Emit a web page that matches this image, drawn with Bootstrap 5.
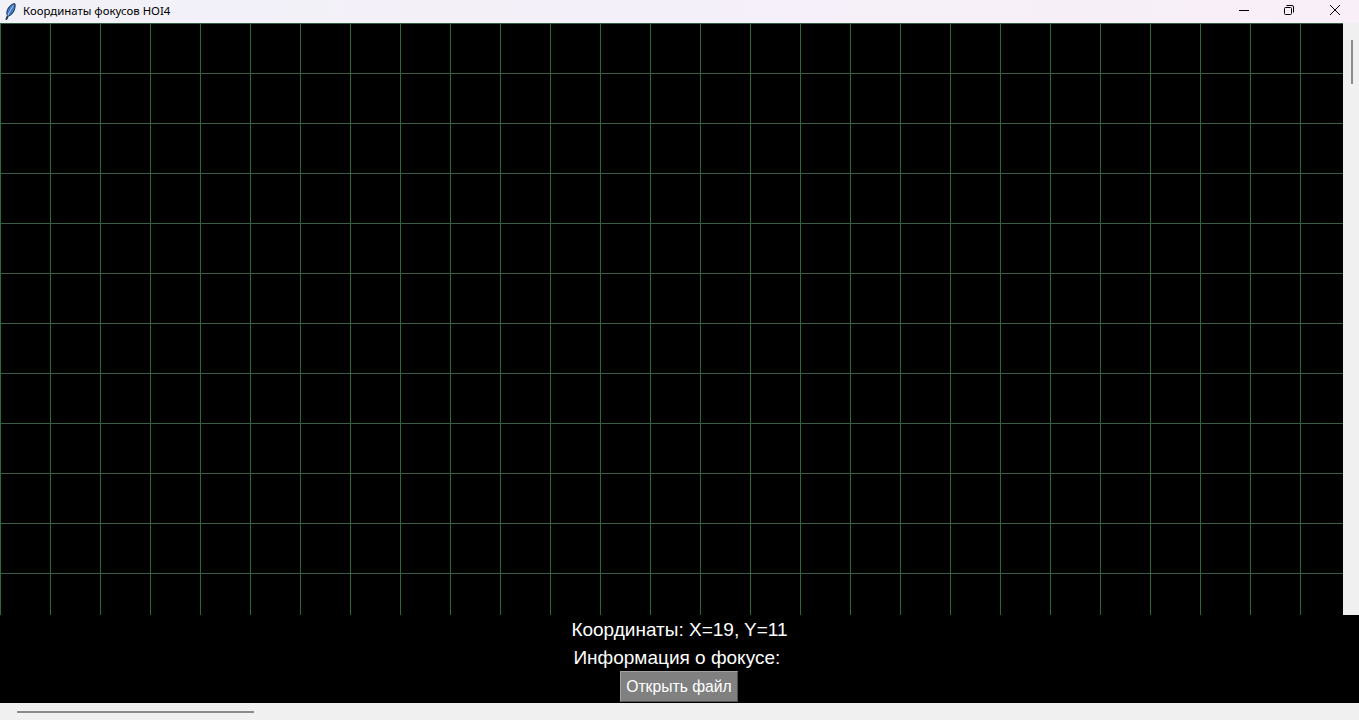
<!DOCTYPE html>
<html lang="ru">
<head>
    <meta charset="UTF-8">
    <meta name="viewport" content="width=device-width, initial-scale=1.0">
    <title>Координаты фокусов HOI4</title>
    <link href="https://cdn.jsdelivr.net/npm/bootstrap@5.3.0/dist/css/bootstrap.min.css" rel="stylesheet">
    <style>
        html, body {
            height: 100%;
            overflow: hidden;
        }
        body {
            background: #f0f0f0;
        }
        .app-window {
            height: 720px;
        }
        .title-bar {
            height: 23px;
            background: linear-gradient(90deg, #f2f1f8 0%, #f4f0f9 50%, #f9eff8 100%);
            font-family: "Noto Sans", sans-serif;
            font-size: 11.4px;
            color: #000;
        }
        .title-icon {
            width: 23px;
            padding-left: 4px;
        }
        .title-text {
            margin-bottom: 2px;
        }
        .win-btn {
            width: 46px;
            height: 20px;
        }
        .win-btns {
            margin-right: 1px;
        }
        .canvas-row {
            height: 592px;
        }
        .grid-area {
            background-color: #000;
            background-image:
                linear-gradient(90deg, #27693b 1px, transparent 1px),
                linear-gradient(180deg, #375c45 1px, transparent 1px);
            background-size: 50px 50px;
        }
        .v-scroll {
            width: 16px;
            background: #f0f0f0;
            padding: 17px 6px 0 8px;
        }
        .v-thumb {
            height: 44px;
            background: #8b8b8b;
        }
        .info-panel {
            height: 88px;
            background: #000;
            color: #fff;
            font-family: "Liberation Sans", sans-serif;
            font-size: 19px;
            padding-top: 3px;
        }
        .info-line {
            height: 24px;
            line-height: 24px;
            white-space: pre;
        }
        .open-btn {
            width: 118px;
            height: 31px;
            padding: 0;
            margin: 1px 1px 0 0;
            background: #808080;
            color: #fff;
            font-family: "Liberation Sans", sans-serif;
            font-size: 15.7px;
            line-height: 30px;
            border: 1px solid;
            border-color: #a0a0a0 #505050 #505050 #a0a0a0;
            border-radius: 0;
        }
        .h-scroll {
            height: 17px;
            background: #f0f0f0;
            padding: 8px 0 0 17px;
        }
        .h-thumb {
            width: 237px;
            height: 2px;
            background: #8b8b8b;
        }
    </style>
</head>
<body>
    <div class="app-window d-flex flex-column">
        <!-- Window title bar -->
        <div class="title-bar d-flex align-items-center">
            <div class="title-icon d-flex flex-shrink-0">
                <svg width="12" height="17" viewBox="0 0 12 17">
                    <path d="M10.8 .6C7.6 .8 4.3 3.8 3.2 7.6 2.6 9.6 2.7 11.2 3.3 12.4L1.9 16.4H2.9L4.3 13C7 12.6 9.6 9.8 10.6 6.3 11.2 4.1 11.4 2 10.8 .6Z" fill="#3f78c8" stroke="#10223f" stroke-width=".9"/>
                    <path d="M9.4 2.6 5.4 9 3.9 12.6" fill="none" stroke="#bcd8f5" stroke-width=".9"/>
                </svg>
            </div>
            <span class="title-text flex-grow-1">Координаты фокусов HOI4</span>
            <div class="win-btns d-flex align-self-start">
                <div class="win-btn d-flex align-items-center justify-content-center">
                    <svg width="12" height="10" viewBox="0 0 12 10"><path d="M2 5.5H12" stroke="#000" stroke-width="1"/></svg>
                </div>
                <div class="win-btn d-flex align-items-center justify-content-center">
                    <svg width="10" height="10" viewBox="0 0 10 10" fill="none" stroke="#000" stroke-width="1"><rect x=".5" y="2.5" width="7" height="7" rx="1"/><path d="M2.5 .5H8A1.5 1.5 0 0 1 9.5 2V7.5"/></svg>
                </div>
                <div class="win-btn d-flex align-items-center justify-content-center">
                    <svg width="10" height="10" viewBox="0 0 10 10"><path d="M0 0 10 10M10 0 0 10" stroke="#000" stroke-width="1"/></svg>
                </div>
            </div>
        </div>

        <!-- Canvas with scrollbar -->
        <div class="canvas-row d-flex">
            <div class="grid-area flex-grow-1"></div>
            <div class="v-scroll flex-shrink-0"><div class="v-thumb"></div></div>
        </div>

        <!-- Info labels and button -->
        <div class="info-panel d-flex flex-column align-items-center">
            <div class="info-line mb-1">Координаты: X=19, Y=11</div>
            <div class="info-line">Информация о фокусе: </div>
            <button type="button" class="btn open-btn">Открыть файл</button>
        </div>

        <div class="h-scroll"><div class="h-thumb"></div></div>
    </div>
</body>
</html>
